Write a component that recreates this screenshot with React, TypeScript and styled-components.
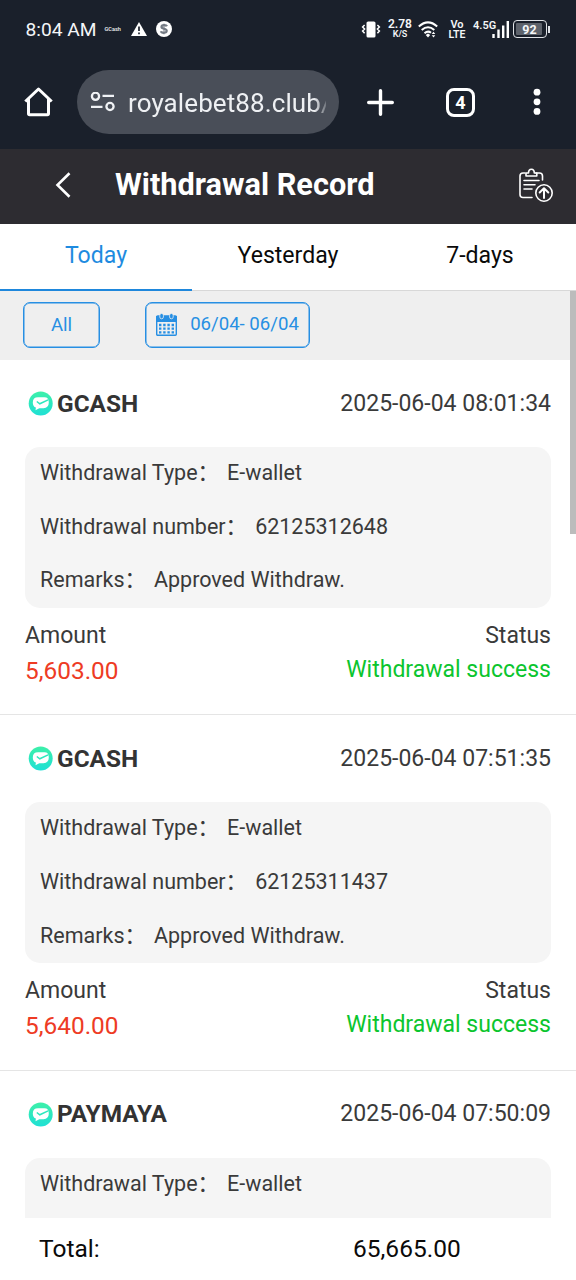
import React from "react";
import styled, { createGlobalStyle } from "styled-components";

const GlobalStyle = createGlobalStyle`
  * { box-sizing: border-box; }
  body { margin: 0; background: #fff; overflow: hidden; }
`;

const Screen = styled.div`
  width: 576px;
  height: 1280px;
  display: flex;
  flex-direction: column;
  overflow: hidden;
  background: #fff;
  color: #3a3a3a;
  font-family: Roboto, "Noto Sans CJK SC", sans-serif;
  white-space: nowrap;
  svg { display: block; flex: none; }
`;

const StatusBar = styled.div`
  height: 58px;
  flex: none;
  display: flex;
  align-items: center;
  justify-content: space-between;
  padding: 0 26px 0 25.5px;
  background: #1a202b;
  color: #f4f6f8;
`;

const Cluster = styled.div`
  display: flex;
  align-items: center;
`;

const Clock = styled.span`
  width: 71px;
  padding-top: 1px;
  font-size: 19.2px;
  line-height: 24px;
`;

const CarrierTag = styled.span`
  width: 17px;
  margin: 0 9px 0 8px;
  font-size: 5.6px;
  line-height: 8px;
  font-weight: 500;
`;

const Stack = styled.div<{ $width: number; $before: number; $after: number }>`
  width: ${(p) => p.$width}px;
  margin: 0 ${(p) => p.$after}px 0 ${(p) => p.$before}px;
  display: flex;
  flex-direction: column;
  align-items: center;
  font-weight: 600;
`;

const StackLine = styled.span<{ $size: number; $height: number }>`
  font-size: ${(p) => p.$size}px;
  line-height: ${(p) => p.$height}px;
`;

const Network = styled.span`
  height: 20px;
  width: 19px;
  font-size: 11px;
  line-height: 13px;
  font-weight: 600;
`;

const Battery = styled.div`
  width: 34px;
  height: 18px;
  margin-left: 4px;
  padding: 2px;
  border: 1.5px solid #dfe2e6;
  border-radius: 4px;
`;

const BatteryLevel = styled.div`
  height: 100%;
  width: 26px;
  background: #5d626b;
  border-radius: 1px;
  font-size: 12.5px;
  line-height: 13px;
  padding-left: 1px;
  font-weight: 700;
  text-align: center;
`;

const BatteryTip = styled.div`
  width: 2px;
  height: 7px;
  margin-left: 1px;
  background: #dfe2e6;
`;

const BrowserBar = styled.div`
  height: 91px;
  flex: none;
  display: flex;
  align-items: center;
  padding: 0 33px 3px 24px;
  background: #1a202b;
  color: #fff;
`;

const AddressField = styled.div`
  width: 262px;
  height: 64px;
  margin: 0 28px 0 24px;
  padding-left: 13px;
  display: flex;
  align-items: center;
  border-radius: 32px;
  background: #494e58;
`;

const Address = styled.span`
  width: 198px;
  margin-left: 13px;
  padding-top: 1px;
  overflow: hidden;
  font-size: 26px;
  line-height: 36px;
  letter-spacing: 0.1px;
  color: #eef0f3;
  mask-image: linear-gradient(90deg, #000 186px, transparent 202px);
`;

const TabCount = styled.div`
  width: 29px;
  height: 29px;
  margin: 0 58px 0 52px;
  border: 3px solid #fff;
  border-radius: 8px;
  font-size: 18px;
  line-height: 24px;
  font-weight: 700;
  text-align: center;
`;

const Header = styled.header`
  height: 75px;
  flex: none;
  display: flex;
  align-items: center;
  padding: 0 23px 4px 55px;
  background: #2d2c31;
  color: #fff;
`;

const Title = styled.h1`
  flex: 1;
  margin: 0 0 0 43px;
  font-size: 30.7px;
  line-height: 40px;
  font-weight: 700;
`;

const Tabs = styled.nav`
  height: 67px;
  flex: none;
  display: grid;
  grid-template-columns: repeat(3, 1fr);
`;

const Tab = styled.div<{ $active?: boolean }>`
  padding-top: 16px;
  text-align: center;
  font-size: 23.07px;
  line-height: 32px;
  color: ${(p) => (p.$active ? "#1e8be0" : "#0a0a0a")};
  border-bottom: ${(p) => (p.$active ? "2px solid #1e87dc" : "1px solid #d8d8d8")};
`;

const Filters = styled.div`
  height: 69px;
  flex: none;
  display: flex;
  padding: 11px 23px 0;
  gap: 45px;
  background: #efefef;
`;

const FilterButton = styled.div<{ $width: number; $lift?: number }>`
  width: ${(p) => p.$width}px;
  height: 46px;
  padding-bottom: ${(p) => p.$lift ?? 0}px;
  display: flex;
  align-items: center;
  justify-content: center;
  gap: 13px;
  border: 1px solid #278fe3;
  box-shadow: inset 0 0 0 0.5px #278fe3;
  border-radius: 7px;
  color: #278fe3;
  font-size: 18.6px;
  line-height: 26px;
`;

const Records = styled.main`
  height: 858px;
  flex: none;
  overflow: hidden;
`;

const Record = styled.section`
  height: 355.4px;
  padding: 0 25px;
  border-bottom: 1px solid #e5e5e5;
`;

const RecordHead = styled.div`
  height: 87px;
  display: flex;
  align-items: center;
  padding-left: 3px;
`;

const Wallet = styled.strong`
  flex: 1;
  margin-left: 4px;
  font-size: 24.4px;
  line-height: 32px;
  font-weight: 700;
  color: #333;
`;

const Time = styled.span`
  font-size: 23.03px;
  line-height: 32px;
`;

const Details = styled.div`
  height: 160.5px;
  padding-left: 15px;
  border-radius: 15px;
  background: #f5f5f5;
`;

const Detail = styled.div`
  height: 53.7px;
  display: flex;
  font-size: 21.5px;
  line-height: 52px;
`;

const Label = styled.span`
  margin-right: 8px;
`;

const Summary = styled.div`
  display: flex;
  justify-content: space-between;
  padding-top: 11px;
`;

const Column = styled.div<{ $right?: boolean }>`
  text-align: ${(p) => (p.$right ? "right" : "left")};
`;

const Caption = styled.div`
  font-size: 23.03px;
  line-height: 33px;
`;

const Amount = styled.div`
  font-size: 24.4px;
  line-height: 38px;
  color: #ee3b24;
`;

const State = styled.div`
  font-size: 23.03px;
  line-height: 35px;
  color: #0bc52e;
`;

const Footer = styled.footer`
  height: 62px;
  flex: none;
  display: grid;
  grid-template-columns: 314px 1fr;
  padding-left: 39px;
  font-size: 24.5px;
  line-height: 62px;
  color: #0a0a0a;
`;

const ScrollThumb = styled.div`
  position: absolute;
  top: 291px;
  left: 570px;
  width: 6px;
  height: 243px;
  background: #bcbcbc;
`;

const Coin = styled.svg`
  margin-left: 9px;
`;

const WarningIcon = () => (
  <svg width="16" height="14" viewBox="0 0 16 14">
    <path d="M8 0 16 14H0Z" fill="#fff" />
    <path d="M8 4.5v4.6M8 10.5v1.8" stroke="#1a202b" strokeWidth="1.7" />
  </svg>
);

const CoinIcon = () => (
  <Coin width="16" height="16" viewBox="0 0 16 16">
    <circle cx="8" cy="8" r="8" fill="#fff" />
    <path d="M11 5.3C10.3 3.8 5.5 3.6 5.5 6c0 2.2 5.2 1.4 5.2 3.8 0 2.7-5.3 2.4-5.8.5" fill="none" stroke="#747b84" strokeWidth="2.2" />
    <path d="M8 2.7v10.6" stroke="#747b84" strokeWidth="1" />
  </Coin>
);

const VibrateIcon = () => (
  <svg width="20" height="17" viewBox="0 0 20 17">
    <rect x="5.5" y="0.5" width="9" height="16" rx="1.6" fill="#fff" />
    <path d="M3.6 4 1.6 6l2 2-2 2 2 2.2M16.4 4l2 2-2 2 2 2-2 2.2" fill="none" stroke="#fff" strokeWidth="1.5" />
  </svg>
);

const WifiIcon = () => (
  <svg width="20" height="17" viewBox="0 0 20 17">
    <g fill="none" stroke="#fff" strokeWidth="2">
      <path d="M.8 5.5Q10-2.7 19.2 5.5" />
      <path d="M3.7 9Q10 3.5 16.3 9" />
      <path d="M6.5 12.2Q10 9.3 13 11.8" />
    </g>
    <path d="m7.7 14 2.3-1.5 2.2 1.5L10 16.5Z" fill="#fff" />
    <path d="m13.7 13 1.8-2.2L17.3 13ZM13.7 14.2h3.6l-1.8 2.3Z" fill="#fff" />
  </svg>
);

const SignalIcon = () => (
  <svg width="17" height="17" viewBox="0 0 17 17">
    <path d="M1.5 17v-4M6.5 17V8.5M11.2 17V4.5M15.8 17V0" stroke="#fff" strokeWidth="2.4" />
  </svg>
);

const HomeIcon = () => (
  <svg width="29" height="30" viewBox="0 0 29 30">
    <path d="M1.3 14.5 14.5 2 27.7 14.5M4.5 12v14.5q0 1.2 1.2 1.2h17.6q1.2 0 1.2-1.2V12" fill="none" stroke="#fff" strokeWidth="3" strokeLinejoin="round" />
  </svg>
);

const SiteIcon = () => (
  <svg width="25" height="20" viewBox="0 0 25 20">
    <g fill="none" stroke="#f0f2f5" strokeWidth="2.3">
      <circle cx="5.5" cy="4.3" r="3.6" />
      <path d="M12.5 3.8H24M1 14.8h11.5" />
      <circle cx="20" cy="14.5" r="3.6" />
    </g>
  </svg>
);

const PlusIcon = () => (
  <svg width="27" height="27" viewBox="0 0 27 27">
    <path d="M13.5 1.7v23.6M1.7 13.5h23.6" stroke="#fff" strokeWidth="3.4" strokeLinecap="round" />
  </svg>
);

const MenuIcon = () => (
  <svg width="8" height="28" viewBox="0 0 8 28">
    <g fill="#fff">
      <circle cx="4" cy="4.2" r="3.4" />
      <circle cx="4" cy="13.8" r="3.4" />
      <circle cx="4" cy="23.4" r="3.4" />
    </g>
  </svg>
);

const BackIcon = () => (
  <svg width="17" height="26" viewBox="0 0 17 26">
    <path d="M14.5 1.2 2.5 13l12 11.8" fill="none" stroke="#fff" strokeWidth="2.6" />
  </svg>
);

const ClipboardUploadIcon = () => (
  <svg width="35" height="34" viewBox="0 0 35 34">
    <g fill="none" stroke="#fff" strokeWidth="1.6" strokeLinecap="round" strokeLinejoin="round">
      <path d="M7 5H5Q2 5 2 8v18.500Q2 29.500 5 29.500H14M18 5h3.500q3 0 3 3V12" />
      <path d="M8 8V5H10.500Q10.500 1.200 13.400 1.200T16.300 5H18.800V8Z" />
      <path d="M6 12.500h15M6 16.800h11M6 21h8" />
      <circle cx="26" cy="25" r="8.200" />
      <path d="M26 30v-9.500M21.700 24.500l4.300-4.200 4.300 4.200" strokeWidth="2" />
    </g>
  </svg>
);

const CalendarIcon = () => (
  <svg width="21" height="23" viewBox="0 0 21 23">
    <rect x="0.700" y="3" width="19.600" height="19.300" rx="1" fill="#efefef" stroke="#278fe3" strokeWidth="1.400" />
    <path d="M0 3h21v6H0Z" fill="#278fe3" />
    <g fill="#278fe3" stroke="#efefef" strokeWidth="0.800">
      <rect x="3.800" y="0.400" width="3.600" height="5.400" rx="1.800" />
      <rect x="13.600" y="0.400" width="3.600" height="5.400" rx="1.800" />
    </g>
    <path d="M3 12h15M3 15.700h15M3 19.400h15" stroke="#278fe3" strokeWidth="2.300" strokeDasharray="2.400 1.800" />
  </svg>
);

const WalletIcon = () => (
  <svg width="25" height="25" viewBox="0 0 25 25">
    <defs>
      <linearGradient id="mint" x1="0" y1="0" x2="0" y2="1">
        <stop stopColor="#3df0a9" />
        <stop offset="1" stopColor="#1fe0d5" />
      </linearGradient>
    </defs>
    <circle cx="12.700" cy="12.500" r="12" fill="url(#mint)" />
    <path d="M10 6.300h6.500q4.300 0 4.300 5.200 0 5.400-5.300 5.700h-4.200L7.500 19.300l.4-2.700Q4.800 15.600 4.800 11.500 4.800 6.300 10 6.300Z" fill="#fff" />
    <path d="m8.800 10.500 3 2.300 8.300-3.900" fill="none" stroke="#2ce8bd" strokeWidth="1.500" />
  </svg>
);

const records = [
  { wallet: "GCASH", time: "2025-06-04 08:01:34", number: "62125312648", amount: "5,603.00" },
  { wallet: "GCASH", time: "2025-06-04 07:51:35", number: "62125311437", amount: "5,640.00" },
  { wallet: "PAYMAYA", time: "2025-06-04 07:50:09" },
];

export default function App() {
  return (
    <Screen>
      <GlobalStyle />
      <StatusBar>
        <Cluster>
          <Clock>8:04 AM</Clock>
          <CarrierTag>GCash</CarrierTag>
          <WarningIcon />
          <CoinIcon />
        </Cluster>
        <Cluster>
          <VibrateIcon />
          <Stack $width={24} $before={7} $after={6}>
            <StackLine $size={12} $height={11}>2.78</StackLine>
            <StackLine $size={9} $height={9}>K/S</StackLine>
          </Stack>
          <WifiIcon />
          <Stack $width={18} $before={10} $after={7}>
            <StackLine $size={11} $height={10}>Vo</StackLine>
            <StackLine $size={10.5} $height={9}>LTE</StackLine>
          </Stack>
          <Network>4.5G</Network>
          <SignalIcon />
          <Battery>
            <BatteryLevel>92</BatteryLevel>
          </Battery>
          <BatteryTip />
        </Cluster>
      </StatusBar>
      <BrowserBar>
        <HomeIcon />
        <AddressField>
          <SiteIcon />
          <Address>royalebet88.club/</Address>
        </AddressField>
        <PlusIcon />
        <TabCount>4</TabCount>
        <MenuIcon />
      </BrowserBar>
      <Header>
        <BackIcon />
        <Title>Withdrawal Record</Title>
        <ClipboardUploadIcon />
      </Header>
      <Tabs>
        <Tab $active>Today</Tab>
        <Tab>Yesterday</Tab>
        <Tab>7-days</Tab>
      </Tabs>
      <Filters>
        <FilterButton $width={77}>All</FilterButton>
        <FilterButton $width={165} $lift={2}>
          <CalendarIcon />
          <span>06/04- 06/04</span>
        </FilterButton>
      </Filters>
      <Records>
        {records.map((r) => (
          <Record key={r.time}>
            <RecordHead>
              <WalletIcon />
              <Wallet>{r.wallet}</Wallet>
              <Time>{r.time}</Time>
            </RecordHead>
            <Details>
              <Detail>
                <Label>Withdrawal Type：</Label>
                <span>E-wallet</span>
              </Detail>
              {r.number && (
                <>
                  <Detail>
                    <Label>Withdrawal number：</Label>
                    <span>{r.number}</span>
                  </Detail>
                  <Detail>
                    <Label>Remarks：</Label>
                    <span>Approved Withdraw.</span>
                  </Detail>
                </>
              )}
            </Details>
            {r.amount && (
              <Summary>
                <Column>
                  <Caption>Amount</Caption>
                  <Amount>{r.amount}</Amount>
                </Column>
                <Column $right>
                  <Caption>Status</Caption>
                  <State>Withdrawal success</State>
                </Column>
              </Summary>
            )}
          </Record>
        ))}
      </Records>
      <Footer>
        <span>Total:</span>
        <span>65,665.00</span>
      </Footer>
      <ScrollThumb />
    </Screen>
  );
}
